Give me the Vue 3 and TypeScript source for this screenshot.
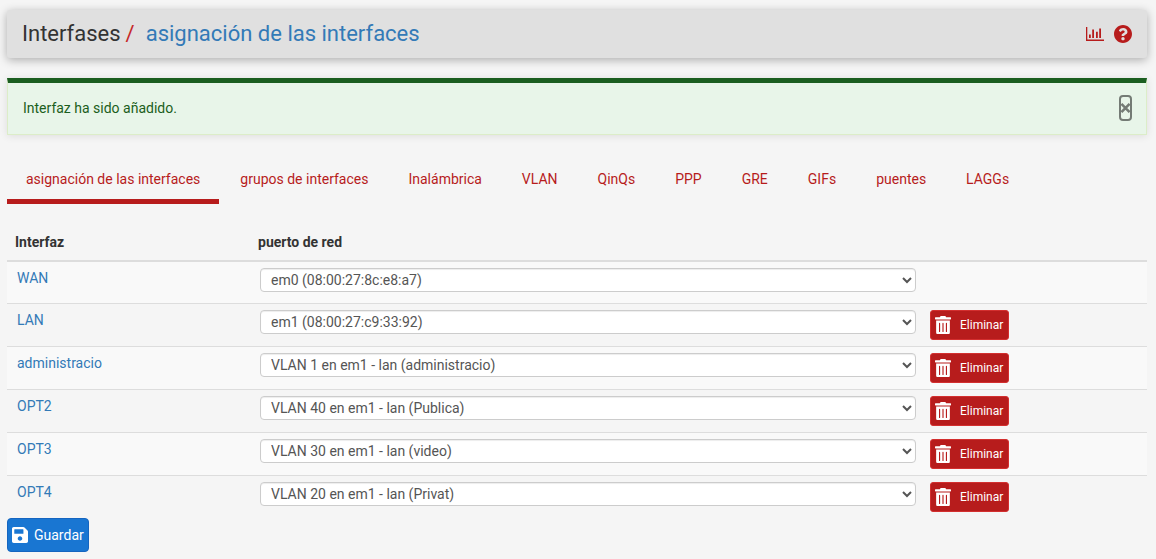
<script setup lang="ts">
import { ref } from 'vue'

interface Assignment {
  name: string
  port: string
  removable: boolean
}

const tabs: string[] = [
  'asignación de las interfaces', 'grupos de interfaces', 'Inalámbrica', 'VLAN',
  'QinQs', 'PPP', 'GRE', 'GIFs', 'puentes', 'LAGGs',
]
const activeTab = ref(0)

const rows = ref<Assignment[]>([
  { name: 'WAN', port: 'em0 (08:00:27:8c:e8:a7)', removable: false },
  { name: 'LAN', port: 'em1 (08:00:27:c9:33:92)', removable: true },
  { name: 'administracio', port: 'VLAN 1 en em1 - lan (administracio)', removable: true },
  { name: 'OPT2', port: 'VLAN 40 en em1 - lan (Publica)', removable: true },
  { name: 'OPT3', port: 'VLAN 30 en em1 - lan (video)', removable: true },
  { name: 'OPT4', port: 'VLAN 20 en em1 - lan (Privat)', removable: true },
])
const ports = rows.value.map((r) => r.port)
</script>

<template>
  <main class="page">
    <header class="header">
      <h1 class="title">
        <span>Interfases</span><span class="slash">/</span><a class="link">asignación de las interfaces</a>
      </h1>
      <div class="tools">
        <svg class="chart" width="18" height="14" viewBox="0 0 18 14" fill="currentColor">
          <path d="M0 0h1.300v12.500H18V14H0zM3 7.500h1.800V11H3zM6.200 2.500H8V11H6.200zM10 4.800h1.800V11H10zM13.200 1.500H15V11h-1.800z" />
        </svg>
        <svg class="help" width="18" height="18" viewBox="8 8 496 496" fill="currentColor">
          <path d="M504 256c0 136.997-111.043 248-248 248S8 392.997 8 256C8 119.083 119.043 8 256 8s248 111.083 248 248zM262.655 90c-54.497 0-89.255 22.957-116.549 63.758-3.536 5.286-2.353 12.415 2.715 16.258l34.699 26.31c5.205 3.947 12.621 3.008 16.665-2.122 17.864-22.658 30.113-35.797 57.303-35.797 20.429 0 45.698 13.148 45.698 32.958 0 14.976-12.363 22.667-32.534 33.976C247.128 238.528 216 254.941 216 296v4c0 6.627 5.373 12 12 12h56c6.627 0 12-5.373 12-12v-1.333c0-28.462 83.186-29.647 83.186-106.667 0-58.002-60.165-102-116.531-102zM256 338c-25.365 0-46 20.635-46 46 0 25.364 20.635 46 46 46s46-20.636 46-46c0-25.364-20.635-46-46-46z" />
        </svg>
      </div>
    </header>

    <div class="alert">
      <span>Interfaz ha sido añadido.</span>
      <button class="close" type="button" aria-label="Cerrar">
        <svg width="9" height="10" viewBox="0 0 9 10" fill="none" stroke="currentColor" stroke-width="2.6">
          <path d="M.4 .9 8.6 9.1M8.6 .9 .4 9.1" />
        </svg>
      </button>
    </div>

    <nav class="tabs">
      <a v-for="(tab, i) in tabs" :key="tab" class="tab" :class="{ active: i === activeTab }" @click="activeTab = i">{{ tab }}</a>
    </nav>

    <section class="table">
      <div class="row head">
        <span>Interfaz</span>
        <span>puerto de red</span>
      </div>
      <div v-for="row in rows" :key="row.name" class="row body">
        <a class="link name">{{ row.name }}</a>
        <div class="cell">
          <select v-model="row.port" class="select">
            <option v-for="p in ports" :key="p" :value="p">{{ p }}</option>
          </select>
        </div>
        <div class="cell">
          <button v-if="row.removable" class="delete" type="button">
            <svg width="16" height="18.300" viewBox="0 0 448 512" fill="currentColor">
              <path d="M32 464a48 48 0 0 0 48 48h288a48 48 0 0 0 48-48V128H32zm272-256a16 16 0 0 1 32 0v224a16 16 0 0 1-32 0zm-96 0a16 16 0 0 1 32 0v224a16 16 0 0 1-32 0zm-96 0a16 16 0 0 1 32 0v224a16 16 0 0 1-32 0zM432 32H312l-9.400-18.700A24 24 0 0 0 281.100 0H166.800a23.720 23.720 0 0 0-21.400 13.300L136 32H16A16 16 0 0 0 0 48v32a16 16 0 0 0 16 16h416a16 16 0 0 0 16-16V48a16 16 0 0 0-16-16z" />
            </svg>
            <span>Eliminar</span>
          </button>
        </div>
      </div>
    </section>

    <button class="save" type="button">
      <svg width="16" height="16" viewBox="0 32 448 448" fill="currentColor">
        <path d="M433.941 129.941l-83.882-83.882A48 48 0 0 0 316.118 32H48C21.490 32 0 53.490 0 80v352c0 26.510 21.490 48 48 48h352c26.510 0 48-21.490 48-48V163.882a48 48 0 0 0-14.059-33.941zM224 416c-35.346 0-64-28.654-64-64 0-35.346 28.654-64 64-64s64 28.654 64 64c0 35.346-28.654 64-64 64zm96-304.520V212c0 6.627-5.373 12-12 12H76c-6.627 0-12-5.373-12-12V108c0-6.627 5.373-12 12-12h228.520c3.183 0 6.235 1.264 8.485 3.515l3.480 3.480A11.996 11.996 0 0 1 320 111.480z" />
      </svg>
      <span>Guardar</span>
    </button>
  </main>
</template>

<style>
body {
  margin: 0;
  background: #f5f5f5;
}
</style>

<style scoped>
.page {
  box-sizing: border-box;
  height: 559px;
  padding: 10px 9px 0 7px;
  overflow: hidden;
  background: #f5f5f5;
  color: #333;
  font: 14px/20px Roboto, "Liberation Sans", sans-serif;
}
.page * {
  box-sizing: border-box;
}
.link {
  color: #337ab7;
}
.header {
  display: flex;
  align-items: center;
  justify-content: space-between;
  height: 48px;
  padding: 0 15px;
  border-radius: 3px;
  background: #e0e0e0;
  color: #333;
  box-shadow: 0 2px 10px rgba(0, 0, 0, 0.3);
}
.title {
  display: flex;
  margin: 0;
  font-size: 22px;
  font-weight: 400;
  line-height: 24px;
}
.slash {
  margin: 0 11px 0 5px;
  color: #c62828;
}
.tools {
  display: flex;
  align-items: center;
  gap: 10px;
  color: #b71c1c;
}
.alert {
  display: flex;
  align-items: center;
  justify-content: space-between;
  height: 57px;
  margin-top: 20px;
  padding: 0 14px 2px 15px;
  border: 1px solid #dcedc8;
  border-top: 5px solid #1b5e20;
  background: #e8f5e9;
  color: #1b5e20;
  box-shadow: 0 1px 8px rgba(0, 0, 0, 0.1);
}
.close {
  display: flex;
  align-items: center;
  justify-content: center;
  width: 13px;
  height: 26px;
  padding: 0;
  border: 2px solid #747b75;
  border-radius: 4px;
  background: transparent;
  color: #747b75;
}
.close svg {
  flex: none;
}
.tabs {
  display: flex;
  gap: 2px;
  margin-top: 24px;
}
.tab {
  height: 45px;
  padding: 10px 19px 0;
  color: #b71c1c;
}
.active {
  border-bottom: 5px solid #b71c1c;
}
.table {
  margin-top: 21px;
}
.row {
  display: grid;
  grid-template-columns: 243px 668px 1fr;
}
.head {
  height: 37px;
  padding: 7px 8px 0;
  border-bottom: 2px solid #ddd;
  font-weight: 700;
}
.body {
  height: 43px;
  padding: 6px 10px 0;
  border-top: 1px solid #ddd;
}
.body:nth-child(2) {
  height: 41px;
  border-top: 0;
}
.body:nth-child(even) {
  background: #f9f9f9;
}
.select {
  display: block;
  width: 656px;
  height: 24px;
  padding: 0 6px;
  border: 1px solid #ccc;
  border-radius: 4px;
  background-color: #fff;
  color: #555;
  font: inherit;
  box-shadow: inset 0 1px 1px rgba(0, 0, 0, 0.075);
}
.delete {
  display: flex;
  align-items: center;
  gap: 9px;
  width: 79px;
  height: 30px;
  margin-left: 2px;
  padding: 0 4px;
  border: 1px solid #d32f2f;
  border-radius: 3px;
  background: #b71c1c;
  color: #fff;
  font: 12px/18px Roboto, sans-serif;
}
.save {
  display: flex;
  align-items: center;
  gap: 6px;
  width: 82px;
  height: 34px;
  padding: 0 4px;
  border: 1px solid #1565c0;
  border-radius: 4px;
  background: #1976d2;
  color: #fff;
  font: 14px/20px Roboto, sans-serif;
}
</style>
